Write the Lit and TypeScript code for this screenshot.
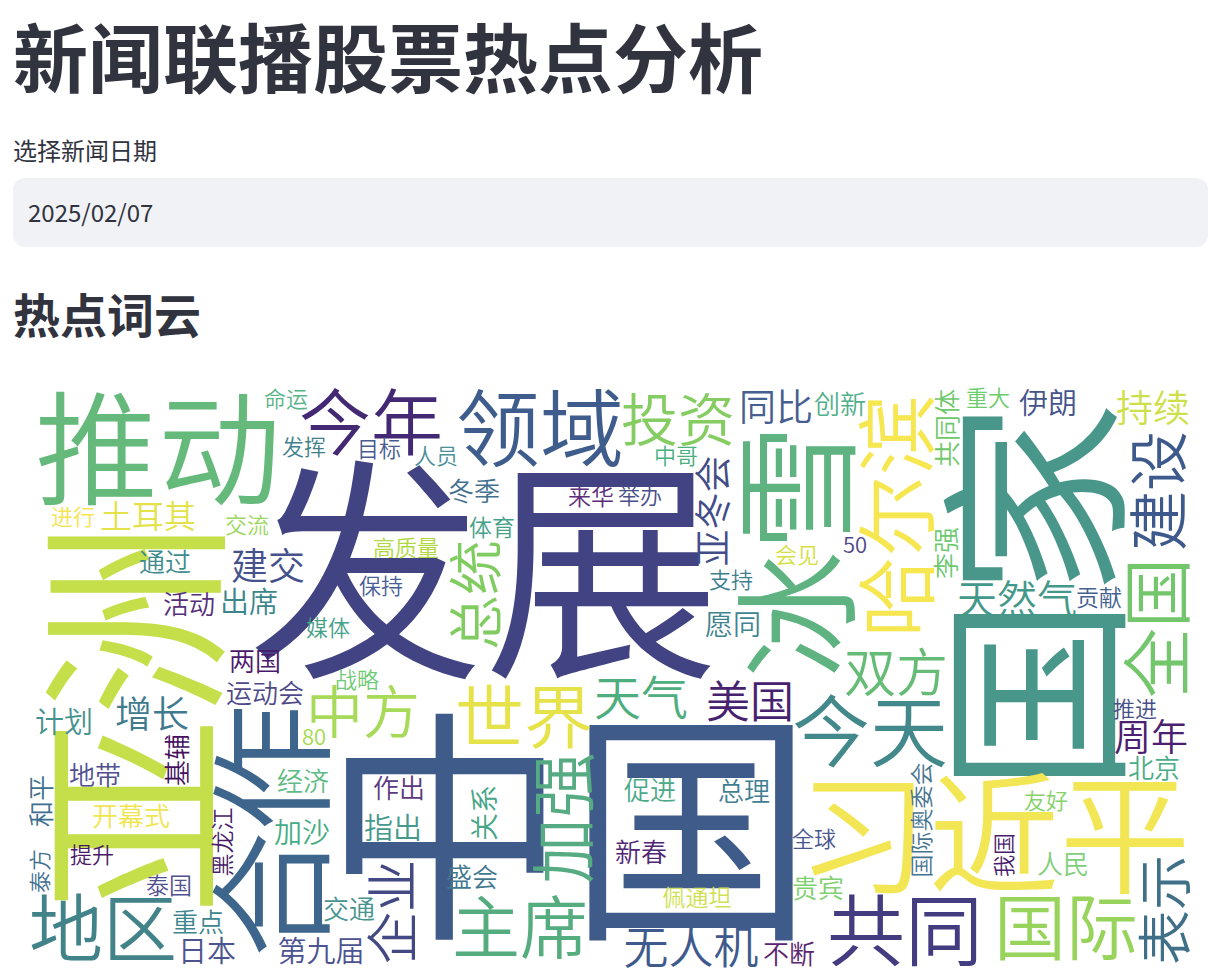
import { LitElement, html, svg, css } from "lit";
import { customElement, property, state } from "lit/decorators.js";

interface Word {
  text: string;
  x: number;
  y: number;
  size: number;
  color: string;
  upright?: boolean;
}

const w = (text: string, x: number, y: number, size: number, color: string): Word => ({ text, x, y, size, color });
/* A word that reads from bottom to top. */
const v = (text: string, x: number, y: number, size: number, color: string): Word => ({
  text, x, y, size, color, upright: true,
});

const WORDS: Word[] = [
  w("发展", 484, 570, 236, "#414382"),
  w("中国", 568, 827, 246, "#3f5b8a"),
  v("国家", 1035, 597, 196, "#49978a"),
  v("亚洲", 134, 717, 198, "#c5df4a"),
  w("习近平", 994, 833, 131, "#f3e655"),
  w("推动", 158, 448, 123, "#65b97a"),
  v("冰雪", 797, 551, 127, "#5eb380"),
  v("合作", 272, 831, 127, "#3e668c"),
  w("领域", 540, 428, 84, "#3f5d8c"),
  v("哈尔滨", 896, 516, 81, "#f6e650"),
  w("共同", 905, 930, 78, "#443c80"),
  w("今天", 870, 731, 78, "#43888a"),
  w("今年", 371, 422, 72, "#432874"),
  w("地区", 103, 928, 74, "#42838a"),
  w("国际", 1066, 927, 72, "#98d45c"),
  v("全国", 1157, 628, 70, "#74c66c"),
  w("世界", 524, 717, 69, "#e6e24a"),
  v("加强", 563, 818, 66, "#57ab82"),
  w("主席", 520, 927, 68, "#55ac7e"),
  v("建设", 1158, 491, 60, "#3e5a8c"),
  w("投资", 678, 419, 57, "#85cc62"),
  w("中方", 363, 711, 57, "#a8da5a"),
  v("总统", 475, 595, 55, "#80cc60"),
  v("表示", 1164, 910, 55, "#3f7088"),
  w("双方", 896, 672, 52, "#66bc76"),
  v("企业", 392, 912, 52, "#424983"),
  w("天气", 641, 697, 47, "#4fae80"),
  w("美国", 750, 701, 44, "#46226f"),
  w("无人机", 691, 947, 45, "#3f5a8c"),
  w("天然气", 1017, 599, 40, "#44988a"),
  w("同比", 776, 407, 37, "#475f90"),
  w("持续", 1153, 408, 37, "#cde04b"),
  v("亚冬会", 713, 511, 37, "#424d88"),
  w("建交", 268, 566, 37, "#46528c"),
  w("增长", 152, 714, 37, "#407a8e"),
  w("周年", 1151, 737, 37, "#4c2070"),
  w("土耳其", 148, 516, 32, "#e3e24b"),
  w("伊朗", 1048, 403, 29, "#44548c"),
  w("出席", 249, 602, 29, "#3c868c"),
  w("计划", 64, 722, 29, "#45938f"),
  w("第九届", 321, 951, 29, "#4b5390"),
  w("指出", 393, 828, 29, "#45988c"),
  w("愿同", 733, 624, 28, "#3f8490"),
  w("加沙", 302, 832, 28, "#46ac85"),
  w("日本", 207, 951, 29, "#4c548f"),
  v("关系", 484, 813, 28, "#46a588"),
  w("创新", 840, 404, 26, "#4fb08a"),
  v("共同体", 947, 428, 26, "#6ec86a"),
  w("冬季", 474, 491, 26, "#44708f"),
  v("李强", 946, 553, 26, "#6cc96f"),
  w("通过", 165, 562, 26, "#3f8b8e"),
  w("活动", 189, 604, 26, "#56307a"),
  w("两国", 255, 661, 26, "#4a176c"),
  w("运动会", 265, 693, 26, "#4e4a89"),
  v("基辅", 177, 760, 26, "#44105e"),
  w("地带", 95, 775, 26, "#50508f"),
  v("和平", 41, 801, 26, "#3e6f8e"),
  w("开幕式", 131, 816, 26, "#f0e550"),
  w("重点", 198, 922, 26, "#3f868c"),
  w("经济", 303, 781, 26, "#5fba86"),
  w("作出", 399, 788, 26, "#5a3a80"),
  w("盛会", 472, 877, 26, "#41788f"),
  w("交通", 349, 909, 26, "#46938f"),
  w("促进", 650, 790, 26, "#4ca98a"),
  w("总理", 744, 791, 26, "#427e92"),
  w("新春", 641, 852, 26, "#4f2775"),
  w("不断", 789, 954, 26, "#5a266f"),
  w("贵宾", 818, 888, 26, "#80d070"),
  w("人民", 1063, 864, 26, "#80cf7a"),
  w("北京", 1154, 768, 26, "#4aac88"),
  w("体育", 492, 527, 23, "#45a188"),
  w("来华", 591, 496, 23, "#5c2d79"),
  w("贡献", 1099, 597, 23, "#44628f"),
  w("泰国", 169, 885, 23, "#50508f"),
  v("黑龙江", 222, 842, 23, "#4a1b6b"),
  w("佩通坦", 697, 897, 23, "#cfe152"),
  v("国际奥委会", 921, 820, 23, "#477590"),
  w("命运", 286, 399, 22, "#58b488"),
  w("中哥", 676, 456, 22, "#4ab07f"),
  w("重大", 988, 398, 22, "#6ccc6a"),
  w("发挥", 304, 447, 22, "#3f7f8c"),
  w("目标", 379, 449, 22, "#475d90"),
  w("人员", 436, 456, 22, "#4c8f99"),
  w("举办", 640, 496, 22, "#4a4f8a"),
  w("高质量", 406, 548, 22, "#b0d940"),
  w("保持", 381, 586, 22, "#475f96"),
  w("媒体", 328, 628, 22, "#45a188"),
  w("战略", 357, 680, 22, "#6fcb75"),
  w("支持", 731, 580, 22, "#3f7f90"),
  w("50", 855, 545, 22, "#50478a"),
  w("会见", 797, 555, 22, "#d5e142"),
  w("进行", 73, 517, 22, "#f5e352"),
  w("交流", 247, 525, 22, "#9bd860"),
  w("提升", 92, 855, 22, "#4a1868"),
  v("泰方", 40, 871, 22, "#41708f"),
  w("80", 314, 737, 22, "#a5da4c"),
  w("全球", 814, 839, 22, "#4a568f"),
  w("友好", 1046, 801, 22, "#86d268"),
  v("我国", 1004, 855, 22, "#4a1c70"),
  w("推进", 1135, 709, 22, "#474f88"),
];

@customElement("word-cloud")
export class WordCloud extends LitElement {
  @property({ attribute: false }) words: Word[] = [];

  static styles = css`
    :host {
      display: block;
    }
    .cloud {
      display: block;
      width: 100%;
      height: auto;
      overflow: visible;
    }
    .word {
      text-anchor: middle;
      font-family: "Noto Sans CJK SC", sans-serif;
      font-weight: 350;
    }
  `;

  render() {
    return html`
      <svg class="cloud" viewBox="13 368 1195 611" aria-label="热点词云">
        ${this.words.map((word) => {
          const turn = word.upright ? " rotate(-90)" : "";
          return svg`<text
            class="word"
            transform="translate(${word.x} ${word.y})${turn}"
            y=${Math.round(word.size * 0.38)}
            font-size=${word.size}
            fill=${word.color}
          >${word.text}</text>`;
        })}
      </svg>
    `;
  }
}

@customElement("app-root")
export class AppRoot extends LitElement {
  @state() private date = "2025/02/07";

  static styles = css`
    :host {
      display: block;
      background: #ffffff;
      color: #31333f;
      font-family: "Noto Sans CJK SC", sans-serif;
    }
    .page {
      display: flex;
      flex-direction: column;
      padding: 10px 0 0 13px;
    }
    .title {
      margin: 0 0 32px;
      font-size: 75px;
      line-height: 90px;
      font-weight: 700;
    }
    .field {
      display: flex;
      flex-direction: column;
      gap: 10px;
      margin-bottom: 38px;
    }
    .label {
      font-size: 24px;
      line-height: 36px;
    }
    .date {
      box-sizing: border-box;
      width: 100%;
      padding: 15px 15px 17px;
      border: 0;
      border-radius: 12px;
      background: #f0f2f6;
      color: inherit;
      font-family: inherit;
      font-size: 24px;
      line-height: 37px;
      outline: none;
    }
    .date:focus-visible {
      box-shadow: inset 0 0 0 2px #ff4b4b;
    }
    .subtitle {
      margin: 0 0 27px;
      font-size: 47px;
      line-height: 56px;
      font-weight: 700;
    }
  `;

  render() {
    return html`
      <main class="page">
        <h1 class="title">新闻联播股票热点分析</h1>
        <div class="field">
          <label class="label" for="news-date">选择新闻日期</label>
          <input
            class="date"
            id="news-date"
            type="text"
            .value=${this.date}
            @change=${(e: Event) => (this.date = (e.target as HTMLInputElement).value)}
          />
        </div>
        <h2 class="subtitle">热点词云</h2>
        <word-cloud .words=${WORDS}></word-cloud>
      </main>
    `;
  }
}
